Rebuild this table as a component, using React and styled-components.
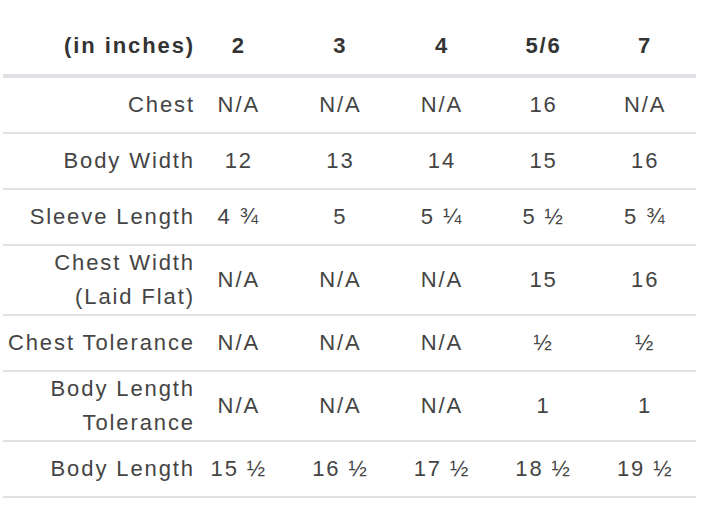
import React from "react";
import styled, { createGlobalStyle } from "styled-components";

const Global = createGlobalStyle`
  html, body { margin: 0; padding: 0; background: #ffffff; }
  body { font-family: "Liberation Sans", Arial, sans-serif; }
`;

const Page = styled.div`
  padding: 18px 0 0 3px;
`;

const Table = styled.table`
  width: 693px;
  table-layout: fixed;
  border-collapse: collapse;
  font-family: "Liberation Sans", Arial, sans-serif;
  font-size: 22px;
  letter-spacing: 1.9px;
  color: #444444;
`;

const LabelCol = styled.col`
  width: 185px;
`;

const HeadCell = styled.th`
  height: 56px;
  padding: 0;
  font-weight: 700;
  color: #333333;
  text-align: ${(p) => (p.$label ? "right" : "center")};
  border-bottom: 4px solid #e1e1e5;
  vertical-align: middle;
  white-space: nowrap;
`;

const Cell = styled.td`
  height: 54px;
  padding: 0;
  line-height: 34px;
  font-weight: 400;
  text-align: ${(p) => (p.$label ? "right" : "center")};
  border-bottom: 2px solid #e1e1e5;
  vertical-align: middle;
  white-space: nowrap;
`;

const LabelText = styled.span`
  display: inline-block;
  margin-right: -7px;
`;

const sizes = ["2", "3", "4", "5/6", "7"];

const rows = [
  { label: ["Chest"], values: ["N/A", "N/A", "N/A", "16", "N/A"] },
  { label: ["Body Width"], values: ["12", "13", "14", "15", "16"] },
  { label: ["Sleeve Length"], values: ["4 ¾", "5", "5 ¼", "5 ½", "5 ¾"] },
  { label: ["Chest Width", "(Laid Flat)"], values: ["N/A", "N/A", "N/A", "15", "16"] },
  { label: ["Chest Tolerance"], values: ["N/A", "N/A", "N/A", "½", "½"] },
  { label: ["Body Length", "Tolerance"], values: ["N/A", "N/A", "N/A", "1", "1"] },
  { label: ["Body Length"], values: ["15 ½", "16 ½", "17 ½", "18 ½", "19 ½"] },
];

export default function App() {
  return (
    <Page>
      <Global />
      <Table>
        <colgroup>
          <LabelCol />
          {sizes.map((s) => (
            <col key={s} />
          ))}
        </colgroup>
        <thead>
          <tr>
            <HeadCell $label>
              <LabelText>(in inches)</LabelText>
            </HeadCell>
            {sizes.map((s) => (
              <HeadCell key={s}>{s}</HeadCell>
            ))}
          </tr>
        </thead>
        <tbody>
          {rows.map((r) => (
            <tr key={r.label.join(" ")}>
              <Cell $label>
                <LabelText>
                  {r.label.map((l, i) => (
                    <React.Fragment key={l}>
                      {i > 0 && <br />}
                      {l}
                    </React.Fragment>
                  ))}
                </LabelText>
              </Cell>
              {r.values.map((v, i) => (
                <Cell key={i}>{v}</Cell>
              ))}
            </tr>
          ))}
        </tbody>
      </Table>
    </Page>
  );
}
